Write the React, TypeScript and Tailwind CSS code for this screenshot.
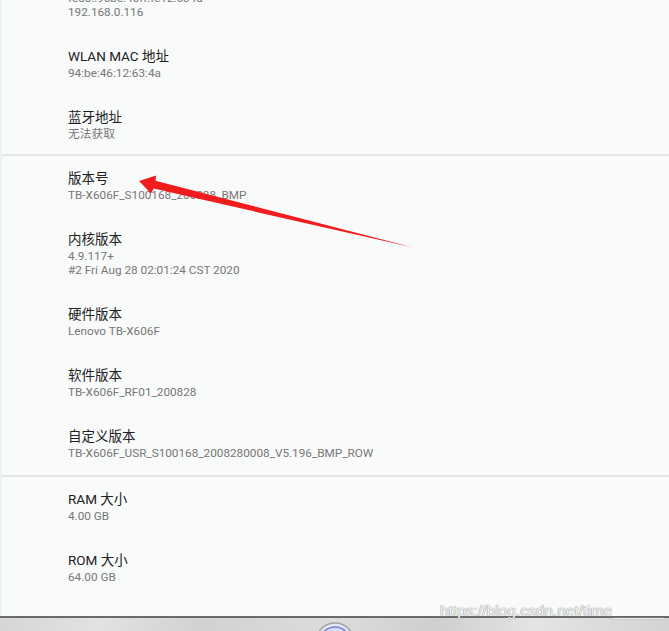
import React from "react";

type Item = { title: string; values: string[] };

const groups: Item[][] = [
  [
    { title: "IP 地址", values: ["fe80::96be:46ff:fe12:634a", "192.168.0.116"] },
    { title: "WLAN MAC 地址", values: ["94:be:46:12:63:4a"] },
    { title: "蓝牙地址", values: ["无法获取"] },
  ],
  [
    { title: "版本号", values: ["TB-X606F_S100168_200828_BMP"] },
    { title: "内核版本", values: ["4.9.117+", "#2 Fri Aug 28 02:01:24 CST 2020"] },
    { title: "硬件版本", values: ["Lenovo TB-X606F"] },
    { title: "软件版本", values: ["TB-X606F_RF01_200828"] },
    { title: "自定义版本", values: ["TB-X606F_USR_S100168_2008280008_V5.196_BMP_ROW"] },
  ],
  [
    { title: "RAM 大小", values: ["4.00 GB"] },
    { title: "ROM 大小", values: ["64.00 GB"] },
  ],
];

function Row({ item }: { item: Item }) {
  return (
    <div className="pl-[66px] pt-[12px] pb-[15px]">
      {/* title */}
      <div className="text-[13.5px] leading-[20px] text-[#212121]">{item.title}</div>
      {/* value lines */}
      {item.values.map((v) => (
        <div key={v} className="text-[11.75px] leading-[14px] text-[#777777]">
          {v}
        </div>
      ))}
    </div>
  );
}

export default function App() {
  return (
    <main
      className="relative w-[669px] h-[631px] overflow-hidden bg-[#f9fafa] flex flex-col"
      style={{ fontFamily: "Roboto, 'Noto Sans CJK SC', sans-serif" }}
    >
      {/* settings list */}
      <div className="flex-1 overflow-hidden border-l-2 border-[#eef2f7]">
        <div className="mt-[-41px]">
          {groups.map((g, gi) => (
            <div
              key={gi}
              className={gi === 1 ? "border-t-2 border-[#e6e7e8] mt-[-2px]" : gi === 2 ? "border-t-2 border-[#e6e7e8]" : ""}
            >
              {g.map((item) => (
                <Row key={item.title} item={item} />
              ))}
            </div>
          ))}
        </div>
      </div>

      {/* nav bar */}
      <div className="h-[15px] shrink-0 border-t-2 border-[#6a6a6a] bg-[linear-gradient(100deg,#d6d6d6_0%,#e2e2e2_15%,#d2d2d2_30%,#dcdcdc_50%,#cfcfcf_65%,#e4e4e4_80%,#d3d3d3_100%)] flex justify-center">
        <svg width="44" height="14" viewBox="0 0 44 14" className="mt-[2px]">
          <circle cx="22" cy="22" r="19" fill="#e6e6ee" stroke="#a0a0a8" strokeWidth="1.5" />
          <circle cx="22" cy="22" r="15" fill="#d8dcf5" stroke="#6f7fe0" strokeWidth="1.5" />
        </svg>
      </div>

      {/* red arrow annotation */}
      <svg className="absolute left-0 top-0 pointer-events-none" width="669" height="631">
        <polygon
          points="139,181 156,175.5 155.5,180.8 413,247.5 153.7,188.6 151,193.5"
          fill="#f21c1c"
        />
      </svg>

      {/* watermark */}
      <div
        className="absolute left-[440px] top-[601px] text-[15.5px] leading-[20px] text-[rgba(255,255,255,0.9)] [text-shadow:0_0_1px_#8a8a8a,0_0_1px_#8a8a8a]"
        style={{ fontFamily: "'Liberation Sans', sans-serif" }}
      >
        https://blog.csdn.net/time______
      </div>
    </main>
  );
}
